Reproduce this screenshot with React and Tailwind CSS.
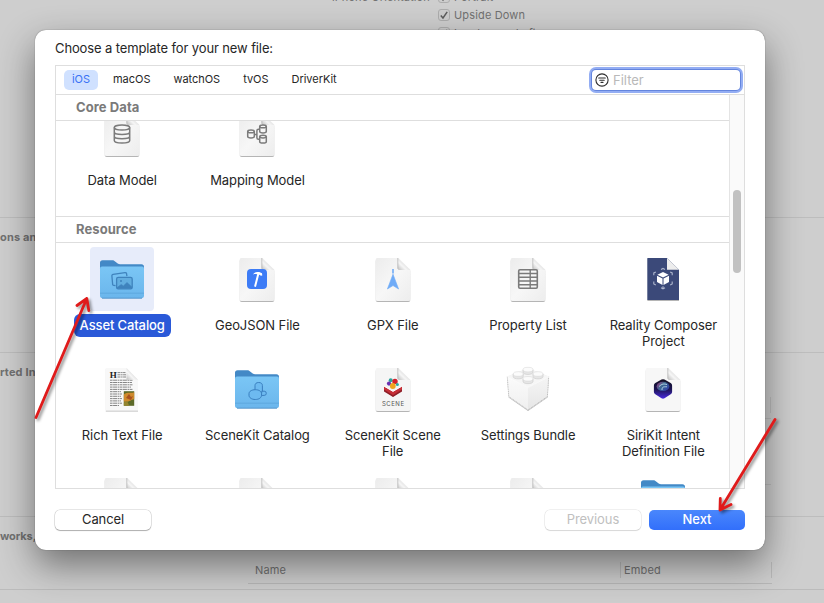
import React from "react";

const GREY = "#7b7b7b";

function Defs() {
  return (
    <svg width="0" height="0" className="absolute" aria-hidden="true">
      <defs>
        <linearGradient id="paper" x1="0" y1="0" x2="1" y2="1">
          <stop offset="0" stopColor="#ececec" />
          <stop offset="0.5" stopColor="#f7f7f7" />
          <stop offset="1" stopColor="#ededed" />
        </linearGradient>
        <linearGradient id="fold" x1="0" y1="1" x2="1" y2="0">
          <stop offset="0" stopColor="#bdbdbd" />
          <stop offset="0.35" stopColor="#f6f6f6" />
          <stop offset="0.5" stopColor="#e6e6e6" />
        </linearGradient>
        <linearGradient id="folderFront" x1="0" y1="0" x2="0" y2="1">
          <stop offset="0" stopColor="#7ac6f5" />
          <stop offset="1" stopColor="#6bb6ec" />
        </linearGradient>
        <linearGradient id="siri" x1="0" y1="0" x2="0" y2="1">
          <stop offset="0" stopColor="#141022" />
          <stop offset="0.5" stopColor="#1b1450" />
          <stop offset="1" stopColor="#4a2be0" />
        </linearGradient>
        <linearGradient id="siriGlow" x1="0" y1="0" x2="1" y2="0.6">
          <stop offset="0" stopColor="#e0409a" />
          <stop offset="0.5" stopColor="#4c8fb5" />
          <stop offset="1" stopColor="#3a56c8" />
        </linearGradient>
        <linearGradient id="brickL" x1="0" y1="0" x2="0" y2="1">
          <stop offset="0" stopColor="#fbfbfb" />
          <stop offset="1" stopColor="#efefef" />
        </linearGradient>
        <linearGradient id="brickR" x1="0" y1="0" x2="0" y2="1">
          <stop offset="0" stopColor="#f5f5f5" />
          <stop offset="1" stopColor="#e6e6e6" />
        </linearGradient>
        <filter id="drop" x="-20%" y="-20%" width="140%" height="150%">
          <feDropShadow dx="0" dy="0.8" stdDeviation="0.7" floodOpacity="0.36" />
        </filter>
      </defs>
    </svg>
  );
}

function Icon({ children }) {
  return (
    <svg width="64" height="64" viewBox="0 0 64 64" className="block">
      {children}
    </svg>
  );
}

function Paper({ fill = "url(#paper)", r = 2 }) {
  return (
    <g>
      <path
        d={`M${14.7 + r} 11H37.5L49.3 22.8V${54 - r}a${r} ${r} 0 0 1 -${r} ${r}H${14.7 + r}a${r} ${r} 0 0 1 -${r} -${r}V${11 + r}a${r} ${r} 0 0 1 ${r} -${r}Z`}
        fill={fill}
        filter="url(#drop)"
      />
      <path d="M36.8 11V21.5a1.6 1.6 0 0 0 1.6 1.6H49.3Z" fill="url(#fold)" />
      <path d="M36.8 11V21.8" stroke="#a9a9a9" strokeWidth="0.8" opacity="0.8" />
    </g>
  );
}

function DataModelIcon() {
  return (
    <Icon>
      <Paper />
      <g fill="none" stroke={GREY} strokeWidth="1.5">
        <ellipse cx="32" cy="25.6" rx="7.7" ry="2.5" />
        <path d="M24.3 25.6V38.5c0 3.4 15.4 3.4 15.4 0V25.6M24.3 30c0 3.3 15.4 3.3 15.4 0M24.3 34.3c0 3.3 15.4 3.3 15.4 0" />
      </g>
    </Icon>
  );
}

function MappingModelIcon() {
  const cylinder = (x, y) => (
    <g>
      <ellipse cx={x} cy={y} rx="3.3" ry="1.3" />
      <path d={`M${x - 3.3} ${y}v5.2c0 1.7 6.6 1.7 6.6 0v-5.2`} />
    </g>
  );
  return (
    <Icon>
      <Paper />
      <g fill="none" stroke={GREY} strokeWidth="1.5">
        {cylinder(26, 29.4)}
        {cylinder(38, 24.4)}
        {cylinder(38, 34.6)}
        <path d="M29.5 32.4h2.3M34.6 27.2h-1.2q-1.5 0-1.5 1.5v7q0 1.5 1.5 1.5h1.2" />
      </g>
    </Icon>
  );
}

function Folder({ children }) {
  return (
    <g>
      <path
        d="M10 15.8a2.6 2.6 0 0 1 2.6-2.6h9.6c1.3 0 2 .5 2.9 1.2l2.6 2.1c.8.6 1.4.8 2.4.8h21.3a2.6 2.6 0 0 1 2.6 2.6V48H10Z"
        fill="#4389c6"
      />
      <path
        d="M10 21.4a2 2 0 0 1 2-2h40a2 2 0 0 1 2 2V48.6a2.6 2.6 0 0 1-2.6 2.6H12.6a2.6 2.6 0 0 1-2.6-2.6Z"
        fill="url(#folderFront)"
      />
      <path d="M10 46.2H54" stroke="#5ba4db" strokeWidth="0.8" />
      <path d="M12 51.2H52" stroke="#4f92c8" strokeWidth="0.9" />
      {children}
    </g>
  );
}

function AssetCatalogIcon() {
  return (
    <Icon>
      <Folder>
        <g fill="none" stroke="#3f83bd" strokeWidth="1.3" strokeLinejoin="round">
          <path d="M25.5 38.6 23.7 38.3a1.3 1.3 0 0 1-1.1-1.5L21.9 29a1.4 1.4 0 0 1 1.2-1.6L35 25.6a1.4 1.4 0 0 1 1.6 1.2l.3 2.4" />
          <rect x="26.6" y="30.3" width="15.6" height="11.6" rx="1.6" fill="#62addf" />
          <circle cx="31" cy="34" r="1" fill="#3f83bd" stroke="none" />
          <path d="m27.2 40.5 4-3 2.2 1.4 3.6-3.4 4.8 4.4v1.3H27.2Z" fill="#3f83bd" strokeWidth="0.6" />
        </g>
      </Folder>
    </Icon>
  );
}

function SceneCatalogIcon() {
  return (
    <Icon>
      <Folder>
        <g fill="#6dbaf0" stroke="#3a7fbf" strokeWidth="1" strokeLinejoin="round">
          <path d="M30 33.5v-5c0-1.8 1.3-3 3.7-3s3.7 1.2 3.7 3v7H32Z" />
          <path d="M36.8 34.2h2.4a1.9 1.9 0 0 1 0 4.2h-2.8Z" />
          <path d="M24 36.7c0-2.4 2.7-4 6.3-4s6.2 1.6 6.2 4v1.6c0 2.4-2.6 4.2-6.2 4.2s-6.3-1.8-6.3-4.2Z" />
        </g>
      </Folder>
    </Icon>
  );
}

function GeoJsonIcon() {
  return (
    <Icon>
      <Paper />
      <rect x="22" y="22" width="20" height="20" rx="4" fill="#3d7cf6" />
      <path d="M33.4 26.5 30.2 38.9" stroke="#fff" strokeWidth="2" strokeLinecap="round" />
      <path d="M27.8 27.4c1.8-2.2 4-2.9 6.4-2.3l2.8 1.2.3 2.3-1.4.2-1.5-1.1c-2.2-.6-3.8-.8-6.6-.3Z" fill="#fff" />
    </Icon>
  );
}

function GpxIcon() {
  return (
    <Icon>
      <Paper />
      <path d="M32 27.2 37.6 42 32 38.6 26.4 42Z" fill="#6fabf7" stroke="#6fabf7" strokeWidth="0.6" strokeLinejoin="round" />
      <path d="M32 22v4.4" stroke="#6fabf7" strokeWidth="1.6" />
    </Icon>
  );
}

function PropertyListIcon() {
  return (
    <Icon>
      <Paper />
      <g fill="none" stroke={GREY} strokeWidth="1.4">
        <rect x="22.7" y="22.7" width="18.6" height="18.6" rx="1.2" strokeWidth="1.6" />
        <path d="M34.2 22.7v18.6M22.7 26.5h18.6M22.7 30.2h18.6M22.7 34h18.6M22.7 37.7h18.6" />
      </g>
    </Icon>
  );
}

function RealityIcon() {
  return (
    <Icon>
      <path d="M16.4 11H36L48 22.8V53H16.4Z" fill="#3a4a79" filter="url(#drop)" />
      <path d="M36 11V22.8H48Z" fill="#ededed" />
      <path d="M32 25 37.6 27.8 32 30.6 26.4 27.8Z" fill="#fff" />
      <path d="m26 28.8 5.5 2.8v6.4L26 35Z" fill="#fff" />
      <path d="m38 28.8-5.5 2.8v6.4L38 35Z" fill="#fff" />
      <g fill="none" stroke="#aeb6cd" strokeWidth="1.1">
        <path d="M30 22.4l2-1 2 1M22.8 28.2v-2.3l2-1M41.2 28.2v-2.3l-2-1M22.8 34.6v2.3l2 1M41.2 34.6v2.3l-2 1M30 40.8l2 1 2-1M32 39.2v2.4" />
      </g>
    </Icon>
  );
}

function RichTextIcon() {
  return (
    <Icon>
      <path d="M15.8 11H36.5L48 22.8V53.6H15.8Z" fill="#f8f8f8" filter="url(#drop)" />
      <text x="19.8" y="21" fontSize="9" fontWeight="700" fill="#222" fontFamily="Liberation Serif, serif">
        H
      </text>
      <g stroke="#777" strokeWidth="0.9">
        <path d="M27.5 15.6h8M27.5 17.8h9M27.5 20h8.5" strokeDasharray="3 .6 1.5 .5" />
        <path
          d="M20 23.2h23M20 25.5h22M20 27.8h23M20 30.1h21M20 32.4h23M20 34.7h11M20 37h12M20 39.3h11M20 41.6h12M20 43.9h11M20 46.2h12M20 48.5h9"
          strokeDasharray="2.6 .5 4 .6 1.6 .5"
        />
      </g>
      <path d="M36.5 11V22.8H48Z" fill="url(#fold)" />
      <rect x="33.8" y="34.2" width="10.4" height="14.6" fill="#5c6a28" />
      <path d="M33.8 37.5c4-3 7-.8 10.4-2.2v7c-4 .6-4.8 3.2-10.4 2.3Z" fill="#cf8a2c" />
      <path d="M36 41l3-4 2 3 2-1-2 4Z" fill="#a8501f" />
      <path d="M33.8 45.5l3.4-1.6 2 4.9h-5.4Z" fill="#94852f" />
    </Icon>
  );
}

function SceneFileIcon() {
  return (
    <Icon>
      <Paper fill="#f5f5f5" />
      <path d="m23 29.4 9 4.6 9-4.6v4.2L32 39.6l-9-6Z" fill="#c52f37" />
      <path d="m23 28.6 9-3.4 9 3.4-9 5.8Z" fill="#f2f2f2" />
      <path d="M23 32.6 32 38.2l9-5.6v1.8L32 40l-9-5.6Z" fill="#8f1f28" />
      <path d="M23.2 29.2 32 34.4l8.8-5.2" fill="none" stroke="#fff" strokeWidth="1" />
      <circle cx="29.7" cy="23.3" r="2" fill="#2fa39c" />
      <circle cx="34" cy="24.4" r="2.7" fill="#d3202c" />
      <circle cx="28" cy="26.6" r="2.1" fill="#6a2fb0" />
      <circle cx="36.4" cy="27.6" r="1.5" fill="#27a8a8" />
      <circle cx="31.8" cy="29" r="2.9" fill="#f0a21e" />
      <text x="32" y="48.6" textAnchor="middle" fontSize="6" fill="#555" fontFamily="Inter, sans-serif" textLength="22">
        SCENE
      </text>
    </Icon>
  );
}

function BrickIcon() {
  const stud = (x, y) => (
    <g>
      <path d={`M${x - 5} ${y}v2.6c0 3 10 3 10 0v-2.6`} fill="#e6e6e6" stroke="#c8c8c8" strokeWidth="0.6" />
      <ellipse cx={x} cy={y} rx="5" ry="2.3" fill="#fbfbfb" stroke="#d2d2d2" strokeWidth="0.5" />
    </g>
  );
  return (
    <Icon>
      <g filter="url(#drop)">
        <path d="M11 19.5 32 11l21 8.5L32 30.5Z" fill="#f6f6f6" />
        <path d="M11 19.5 32 30.5V53L12.6 39.5Z" fill="url(#brickL)" />
        <path d="M53 19.5 32 30.5V53L51.6 39.5Z" fill="url(#brickR)" />
      </g>
      <path d="M11.3 19.7 12.8 39.5 32 53 51.4 39.5 52.7 19.7" fill="none" stroke="#9c9c9c" strokeWidth="0.6" strokeDasharray="1 0.8" />
      <path d="M11.3 19.7 32 30.5 52.7 19.7" fill="none" stroke="#fff" strokeWidth="0.7" />
      {stud(32, 12.6)}
      {stud(22.2, 17)}
      {stud(42, 17)}
      {stud(32, 21.8)}
    </Icon>
  );
}

function SiriIcon() {
  return (
    <Icon>
      <Paper fill="#f7f7f7" />
      <path d="M30.5 22.6q1.5-.8 3 0l6.2 3.5q1.4.8 1.4 2.3v6.6q0 1.5-1.4 2.3l-6.2 4q-1.5.8-3 0l-6.2-4q-1.4-.8-1.4-2.3v-6.6q0-1.5 1.4-2.3Z" fill="url(#siri)" />
      <ellipse cx="32" cy="29.4" rx="6.4" ry="4.6" fill="url(#siriGlow)" opacity="0.7" />
      <path d="M28 29.6c3-3 5-3 8-2M31 33c0-3 1-3.4 5-3.2" fill="none" stroke="#b9dbe8" strokeWidth="0.9" />
    </Icon>
  );
}

const PaperIcon = () => (
  <Icon>
    <Paper />
  </Icon>
);

const FolderIcon = () => (
  <Icon>
    <Folder />
  </Icon>
);

function Template({ icon, label, selected }) {
  return (
    <div className="flex h-[110px] flex-col items-center text-center">
      <div className={selected ? "rounded-[4px] bg-[#e7ecfa]" : ""}>{icon}</div>
      {label && (
        <div
          className={
            "mt-[3px] max-w-[124px] rounded-[6px] px-[6px] pt-[3px] pb-1 text-[13px] leading-4 " +
            (selected ? "bg-[#2a59d8] font-medium tracking-[-0.12px] text-white" : "tracking-[-0.08px] text-[#262626]")
          }
        >
          {label}
        </div>
      )}
    </div>
  );
}

function SectionHeader({ title }) {
  return (
    <div className="flex h-[26px] shrink-0 items-center border-b border-[#dedede] pl-5 text-[13px] font-bold tracking-[0.08px] text-[#7a7a7a]">
      {title}
    </div>
  );
}

function Check({ label }) {
  return (
    <div className="flex h-[18px] items-center gap-1">
      <span className="flex size-3 items-center justify-center rounded-[3px] border border-[#adadad] bg-[#cdcdcd]">
        <svg width="10" height="10" viewBox="0 0 10 10">
          <path d="M1.8 5.4 4 8 8.2 1.8" fill="none" stroke="#5c5c5c" strokeWidth="1.5" />
        </svg>
      </span>
      <span>{label}</span>
    </div>
  );
}

function Backdrop() {
  return (
    <div className="flex h-full flex-col bg-[#cecece] text-[11px] tracking-[0.15px] text-[#717171]">
      <div className="h-[218px] shrink-0 overflow-hidden border-b border-[#bdbdbd]">
        <div className="-mt-3 flex gap-2 pl-[332px]">
          <div className="h-[18px] w-[98px] whitespace-nowrap leading-[18px] tracking-[0.08px]">iPhone Orientation</div>
          <div>
            <Check label="Portrait" />
            <Check label="Upside Down" />
            <Check label="Landscape Left" />
          </div>
        </div>
      </div>
      <div className="h-[135px] shrink-0 border-b border-[#bdbdbd] pt-[11px] font-bold leading-4">ons an</div>
      <div className="flex h-[164px] shrink-0 justify-between border-b border-[#bdbdbd]">
        <div className="pt-[11px] font-bold leading-4">rted In</div>
        <div className="mr-[53px] flex w-[523px] flex-col">
          <div className="mt-[44px] h-4 border-r border-[#bdbdbd]" />
          <div className="h-[6px] border-b border-[#bdbdbd]" />
          <div className="h-[66px] border-b border-[#bdbdbd]" />
        </div>
      </div>
      <div className="flex h-[73px] shrink-0 justify-between border-b border-[#bbbbbb]">
        <div className="pt-[11px] font-bold leading-4 tracking-[-0.1px]">works,</div>
        <div className="mr-[52px] mb-[5px] flex w-[524px] flex-col border-b border-[#b8b8b8] pt-[45px]">
          <div className="flex h-4 border-r border-[#b8b8b8] leading-4">
            <div className="w-[373px] border-r border-[#b8b8b8] pl-[7px]">Name</div>
            <div className="pl-[3px]">Embed</div>
          </div>
        </div>
      </div>
    </div>
  );
}

function Arrows() {
  return (
    <svg
      width="824"
      height="603"
      className="pointer-events-none absolute left-0 top-0 drop-shadow-[2px_2px_1.5px_rgba(0,0,0,0.45)]"
      fill="none"
      stroke="#e01b1b"
      strokeWidth="2.8"
      strokeLinecap="round"
      strokeLinejoin="round"
    >
      <path d="M36 417.5 86.8 298.5M77 305.5 86.8 298.5 88.8 310.5" />
      <path d="M775 419.5 720 510M720.3 498.5 720 510 731 504.5" />
    </svg>
  );
}

const TABS = ["macOS", "watchOS", "tvOS", "DriverKit"];

function Dialog() {
  return (
    <div className="absolute left-[35px] top-[30px] flex h-[520px] w-[730px] flex-col rounded-[11px] bg-white px-5 shadow-[0_0_1px_rgba(0,0,0,0.6),0_15px_36px_rgba(0,0,0,0.46)]">
      <h1 className="h-[35px] pt-[9px] text-[13px] leading-[18px] tracking-[-0.12px] text-[#262626]">
        Choose a template for your new file:
      </h1>
      <div className="flex h-[424px] flex-col border border-[#dedede]">
        <div className="flex h-[29px] shrink-0 items-center justify-between border-b border-[#dedede] pl-2 pr-1">
          <div className="flex items-center text-[11px] leading-5 text-[#262626]">
            <span className="mr-[15px] h-5 w-[34px] rounded-[5px] bg-[#d0e1ff] text-center leading-[19px] text-[#3a72f5]">iOS</span>
            <div className="flex h-5 gap-[23px] leading-[18px] tracking-[-0.03px]">
              {TABS.map((t) => (
                <span key={t}>{t}</span>
              ))}
            </div>
          </div>
          <div className="flex h-5 w-[148px] items-center gap-1 rounded-[4px] bg-white pl-[3px] text-[13px] text-[#b9b9b9] shadow-[0_0_0_1px_#6485dd,0_0_0_3px_#93adf3]">
            <svg width="14" height="14" viewBox="0 0 14 14" fill="none" stroke="#2c2c2c" strokeWidth="1.1" strokeLinecap="round">
              <circle cx="7" cy="7" r="6.1" />
              <path d="M3.7 5h6.6M4.8 7.2h4.4M6 9.4h2" />
            </svg>
            <span className="pt-0.5">Filter</span>
          </div>
        </div>
        <div className="flex min-h-0 flex-1">
          <div className="flex min-w-0 flex-1 flex-col overflow-hidden">
            <SectionHeader title="Core Data" />
            <div className="h-24 shrink-0 overflow-hidden border-b border-[#dedede]">
              <div className="-mt-[19px] -mr-[2px] -ml-[1.5px] grid grid-cols-5">
                <Template icon={<DataModelIcon />} label="Data Model" />
                <Template icon={<MappingModelIcon />} label="Mapping Model" />
              </div>
            </div>
            <SectionHeader title="Resource" />
            <div className="-mr-[2px] -ml-[1.5px] grid grid-cols-5 pt-1">
              <Template icon={<AssetCatalogIcon />} label="Asset Catalog" selected />
              <Template icon={<GeoJsonIcon />} label="GeoJSON File" />
              <Template icon={<GpxIcon />} label="GPX File" />
              <Template icon={<PropertyListIcon />} label="Property List" />
              <Template icon={<RealityIcon />} label="Reality Composer Project" />
              <Template icon={<RichTextIcon />} label="Rich Text File" />
              <Template icon={<SceneCatalogIcon />} label="SceneKit Catalog" />
              <Template icon={<SceneFileIcon />} label="SceneKit Scene File" />
              <Template icon={<BrickIcon />} label="Settings Bundle" />
              <Template icon={<SiriIcon />} label="SiriKit Intent Definition File" />
              <Template icon={<PaperIcon />} />
              <Template icon={<PaperIcon />} />
              <Template icon={<PaperIcon />} />
              <Template icon={<PaperIcon />} />
              <Template icon={<FolderIcon />} />
            </div>
          </div>
          <div className="w-[15px] shrink-0 border-l border-[#e4e4e4] bg-[#fafafa] pl-[3px] pt-[95px]">
            <div className="h-[83px] w-2 rounded-full bg-[#c1c1c1]" />
          </div>
        </div>
      </div>
      <div className="flex gap-2 pt-[21px] text-[13px] leading-[18px]">
        <button className="mr-auto h-5 w-24 rounded-[5px] bg-white pb-0.5 tracking-[-0.1px] text-[#262626] shadow-[0_0_0_0.5px_rgba(0,0,0,0.2),0_1px_1px_rgba(0,0,0,0.24)]">
          Cancel
        </button>
        <button className="h-5 w-24 rounded-[5px] bg-white pb-0.5 tracking-[-0.1px] text-[#c0c0c0] shadow-[0_0_0_0.5px_rgba(0,0,0,0.12),0_1px_1px_rgba(0,0,0,0.1)]">
          Previous
        </button>
        <button className="h-5 w-24 rounded-[5px] bg-linear-to-b from-[#4a87fc] to-[#326ffb] pb-0.5 font-medium text-white">
          Next
        </button>
      </div>
    </div>
  );
}

export default function App() {
  return (
    <div className="relative h-[603px] w-[824px] overflow-hidden font-['Inter',sans-serif]">
      <Defs />
      <Backdrop />
      <Dialog />
      <Arrows />
    </div>
  );
}
